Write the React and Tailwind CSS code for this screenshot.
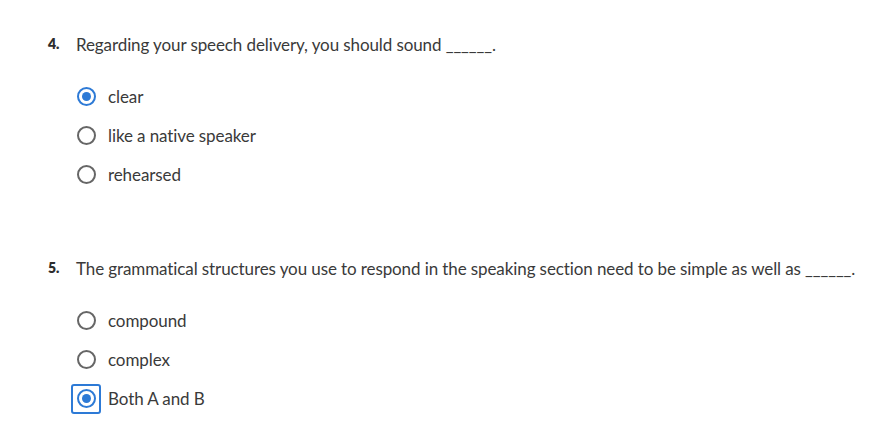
import React from 'react'

const QUESTIONS = [
  {
    num: '4.',
    text: 'Regarding your speech delivery, you should sound ______.',
    options: ['clear', 'like a native speaker', 'rehearsed'],
    selected: 0,
    focused: false,
  },
  {
    num: '5.',
    text: 'The grammatical structures you use to respond in the speaking section need to be simple as well as ______.',
    options: ['compound', 'complex', 'Both A and B'],
    selected: 2,
    focused: true,
  },
]

function Radio({ checked, focused }) {
  return (
    <span
      className={`flex items-center justify-center w-[30px] h-[30px] rounded-[3px] ${
        focused ? 'border-2 border-[#2d7ad6]' : 'border-2 border-transparent'
      }`}
    >
      {checked ? (
        <span className="flex items-center justify-center w-[19px] h-[19px] rounded-full border-2 border-[#2d7ad6]">
          <span className="w-[9px] h-[9px] rounded-full bg-[#2d7ad6]" />
        </span>
      ) : (
        <span className="w-[19px] h-[19px] rounded-full border-2 border-[#666666]" />
      )}
    </span>
  )
}

function Question({ q }) {
  return (
    <div>
      <div className="flex items-center h-[24px]">
        <span className="w-[28px] text-[14px] font-extrabold text-[#2d2d2d] -mt-[3px]">{q.num}</span>
        <span className="text-[17px] text-[#3a3a3a] tracking-[-0.1px]">{q.text}</span>
      </div>
      <div className="mt-[20px] pl-[23px]">
        {q.options.map((opt, i) => (
          <div key={opt} className="flex items-center h-[39px]">
            <Radio checked={i === q.selected} focused={q.focused && i === q.selected} />
            <span className="ml-[7px] text-[17px] text-[#3a3a3a] tracking-[-0.1px]">{opt}</span>
          </div>
        ))}
      </div>
    </div>
  )
}

export default function App() {
  return (
    <div
      className="w-[889px] h-[443px] bg-white pl-[48px] pt-[33px] flex flex-col gap-[63px]"
      style={{ fontFamily: 'Lato, "Noto Sans", sans-serif' }}
    >
      {QUESTIONS.map((q) => (
        <Question key={q.num} q={q} />
      ))}
    </div>
  )
}
